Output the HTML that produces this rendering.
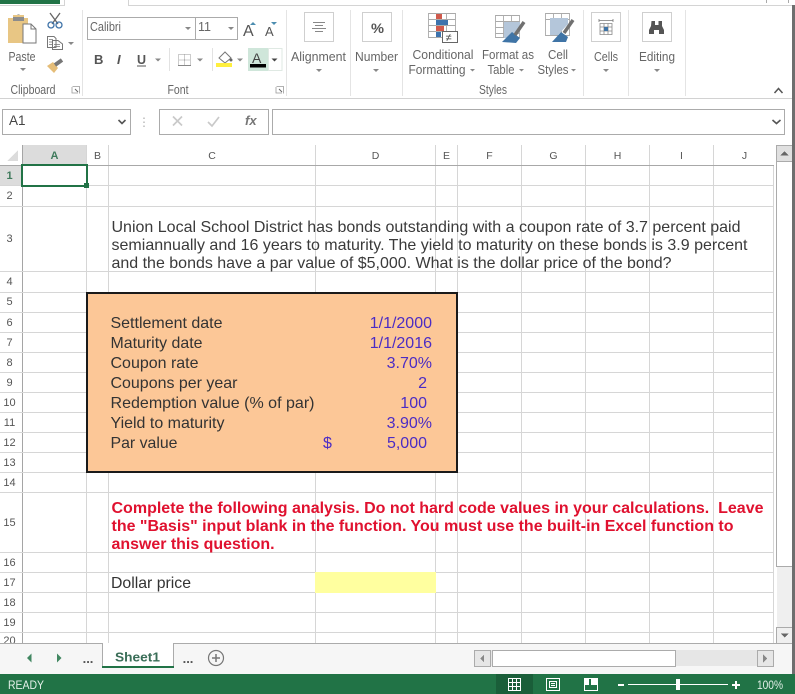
<!DOCTYPE html>
<html><head><meta charset="utf-8"><style>
html,body{margin:0;padding:0;background:#fff;width:795px;height:694px;overflow:hidden}
svg{display:block;position:absolute;left:0;top:0}
text{font-family:"Liberation Sans",sans-serif;white-space:pre}
.g{stroke:#d6d6d6;stroke-width:1;fill:none}
.c{font-size:16px;fill:#333}
.b{font-size:16px;fill:#4b2cc4}
.q{font-size:16px;fill:#3a3a3a}
.h{font-size:12.500px;fill:#666;text-anchor:middle}
.n{font-size:12.500px;fill:#666;text-anchor:middle}
.red{font-size:16px;font-weight:bold;fill:#e0112f}
.tri{fill:#888}
</style></head><body>
<svg width="795" height="694" viewBox="0 0 795 694" xmlns="http://www.w3.org/2000/svg" shape-rendering="crispEdges">
<rect width="795" height="694" fill="#fff"/>
<rect x="0" y="0" width="60" height="4" fill="#217346"/>
<path d="M0 5.500H64.500V0M128.500 0V5.500H792" stroke="#d4d4d4" fill="none"/>
<path d="M766.500 0V3M788.500 0V3" stroke="#aaa"/>
<path d="M82.500 10V96M286.500 10V96M350.500 10V96M402.500 10V96M583.500 10V96M628.500 10V96M685.500 10V96" stroke="#e4e4e4"/>
<path d="M0 98.500H792" stroke="#d2d2d2"/>
<g shape-rendering="auto">
<!-- paste -->
<path d="M8 18H13V15H24V18H28V43H8Z" fill="#e8c684"/>
<path d="M13 17H24V21H13ZM17 15a2 2 0 0 1 3 0" fill="#8c8c8c"/>
<path d="M23 24H31L36 29V43H23Z" fill="#fff" stroke="#777"/>
<path d="M31 24V29H36" fill="none" stroke="#777"/>
<text class="n" x="22" y="61" textLength="27" lengthAdjust="spacingAndGlyphs">Paste</text>
<path class="tri" d="M20 68h6l-3 3z"/>
<!-- cut -->
<path d="M50 13L58 24M60 13L52 24" stroke="#666" stroke-width="1.300" fill="none"/>
<circle cx="51" cy="25" r="3" fill="none" stroke="#3f73a8" stroke-width="1.300"/>
<circle cx="59" cy="25" r="3" fill="none" stroke="#3f73a8" stroke-width="1.300"/>
<!-- copy -->
<path d="M47.500 36.500H54L56 38.500V47.500H47.500Z M52.500 40.500H58L62.500 44V49.500H52.500Z" fill="#fff" stroke="#777"/>
<path d="M49 39.500H53M49 42H52M49 44.500H52M54 44.500H60M54 46.500H60" stroke="#777" stroke-width=".7"/>
<path class="tri" d="M68 42h6l-3 3z"/>
<!-- painter -->
<path d="M47 66L53 62L58 68L54 73Z" fill="#e5bd78"/>
<path d="M55 65L62 60" stroke="#777" stroke-width="4"/>
<text class="n" x="33" y="94" textLength="45" lengthAdjust="spacingAndGlyphs">Clipboard</text>
<path d="M72.500 86.500H79.500V93.500M72 87V93H78" stroke="#999" fill="none" stroke-width=".8"/>
<path d="M75 89L78 92" stroke="#666"/>
<!-- font controls -->
<rect x="87.500" y="17.500" width="150" height="22" fill="#fff" stroke="#ababab"/>
<path d="M195.500 18V39" stroke="#ababab"/>
<text x="90" y="31" font-size="12.500" fill="#666" textLength="31" lengthAdjust="spacingAndGlyphs">Calibri</text>
<text x="198" y="31" font-size="12.500" fill="#666" textLength="13" lengthAdjust="spacingAndGlyphs">11</text>
<path class="tri" d="M185 27h6l-3 3zM228 27h6l-3 3z"/>
<text x="243" y="36" font-size="16" fill="#555">A</text>
<text x="265" y="36" font-size="13" fill="#555">A</text>
<path d="M250 25l3-3 3 3z" fill="#4c8db0"/>
<path d="M271 22h6l-3 3z" fill="#4c8db0"/>
<text x="94" y="64" font-size="13" font-weight="bold" fill="#555">B</text>
<text x="117" y="64" font-size="13" font-weight="bold" font-style="italic" fill="#555" font-family="Liberation Serif">I</text>
<text x="137" y="64" font-size="12.500" font-weight="bold" fill="#555">U</text>
<path d="M137 66H146" stroke="#555"/>
<path class="tri" d="M155 58.500h6l-3 3z"/>
<path d="M169.500 48V71" stroke="#e2e2e2"/>
<path d="M178.500 54.500H190.500V65.500H178.500ZM184.500 54.500V65.500M178.500 60H190.500" stroke="#999" stroke-dasharray="1 1" fill="none"/>
<path d="M178 65.500H191" stroke="#888"/>
<path class="tri" d="M197 58.500h6l-3 3z"/>
<path d="M212.500 48V71" stroke="#e2e2e2"/>
<path d="M219 58L225 52L231 58L225 63Z" fill="#fff" stroke="#777"/>
<circle cx="231" cy="60" r="1.500" fill="#666"/>
<rect x="216" y="63" width="16" height="4" fill="#ffef3e"/>
<path class="tri" d="M237 58.500h6l-3 3z"/>
<rect x="248" y="48" width="20" height="23" fill="#cfe6da"/>
<rect x="268.500" y="48.500" width="13.500" height="22" fill="#fff" stroke="#dfe9e3"/>
<text x="252" y="63" font-size="14" fill="#444">A</text>
<rect x="250" y="64" width="16" height="3.500" fill="#000"/>
<path d="M271.500 58.500h6l-3 3z" fill="#444"/>
<text class="n" x="178" y="94" textLength="21" lengthAdjust="spacingAndGlyphs">Font</text>
<path d="M276.500 86.500H283.500V93.500M276 87V93H282" stroke="#999" fill="none" stroke-width=".8"/>
<path d="M279 89L282 92" stroke="#666"/>
<!-- alignment -->
<rect x="304.500" y="12.500" width="29" height="29" fill="#fff" stroke="#cfcfcf"/>
<path d="M313 22.500H325M315 25.500H323M312 28.500H326M315 31.500H323" stroke="#888"/>
<text class="n" x="318.500" y="61" textLength="55" lengthAdjust="spacingAndGlyphs">Alignment</text>
<path class="tri" d="M316 69h6l-3 3z"/>
<!-- number -->
<rect x="362.500" y="12.500" width="29" height="29" fill="#fff" stroke="#cfcfcf"/>
<text x="371" y="33" font-size="14" fill="#555" font-weight="bold" textLength="13" lengthAdjust="spacingAndGlyphs">%</text>
<text class="n" x="376.500" y="61" textLength="43" lengthAdjust="spacingAndGlyphs">Number</text>
<path class="tri" d="M373 69h6l-3 3z"/>
<!-- conditional formatting -->
<path d="M428.500 13.500H455.500V37.500H428.500ZM428.500 19.500H455.500M428.500 25.500H455.500M428.500 31.500H455.500M437.500 13.500V37.500M446.500 13.500V37.500" stroke="#aaa" fill="#fff" stroke-width=".9"/>
<rect x="436" y="14" width="6" height="5" fill="#d05a4c"/>
<rect x="436" y="20" width="12" height="5" fill="#3d73ad"/>
<rect x="436" y="26" width="8" height="5" fill="#d05a4c"/>
<rect x="436" y="32" width="5" height="5" fill="#3d73ad"/>
<rect x="442.500" y="31.500" width="15" height="11" fill="#fff" stroke="#666"/>
<text x="445.500" y="41" font-size="11" fill="#444">≠</text>
<text class="h" x="443" y="59" textLength="61" lengthAdjust="spacingAndGlyphs">Conditional</text>
<text class="h" x="437" y="74" textLength="57" lengthAdjust="spacingAndGlyphs">Formatting</text>
<path class="tri" d="M470 69h5l-2.500 2.500z"/>
<!-- format as table -->
<path d="M495.500 15.500H519.500V37.500H495.500ZM495.500 21.500H519.500M495.500 27.500H519.500M495.500 33.500H519.500M503.500 15.500V37.500M511.500 15.500V37.500" stroke="#aaa" fill="#fff" stroke-width=".9"/>
<path d="M504 22H520V27L510 38H504Z" fill="#b4c6da"/>
<path d="M502 42L512 32L520 38L516 43Z" fill="#3f74a6"/>
<path d="M515 35L524 22" stroke="#707070" stroke-width="3.500"/>
<text class="h" x="508" y="59" textLength="52" lengthAdjust="spacingAndGlyphs">Format as</text>
<text class="h" x="501" y="74" textLength="27" lengthAdjust="spacingAndGlyphs">Table</text>
<path class="tri" d="M519 69h5l-2.500 2.500z"/>
<!-- cell styles -->
<path d="M545.500 13.500H569.500V35.500H545.500ZM545.500 19.500H569.500M553.500 13.500V35.500M561.500 13.500V35.500" stroke="#aaa" fill="#fff" stroke-width=".9"/>
<path d="M550 18H568V24L558 35H550Z" fill="#b4c6da"/>
<path d="M552 42L561 32L568 37L566 42Z" fill="#3f74a6"/>
<path d="M564 33L573 20" stroke="#707070" stroke-width="3.500"/>
<text class="h" x="558" y="59" textLength="20" lengthAdjust="spacingAndGlyphs">Cell</text>
<text class="h" x="553" y="74" textLength="31" lengthAdjust="spacingAndGlyphs">Styles</text>
<path class="tri" d="M571 69h5l-2.500 2.500z"/>
<text class="n" x="493" y="94" textLength="28" lengthAdjust="spacingAndGlyphs">Styles</text>
<!-- cells -->
<rect x="591.500" y="12.500" width="29" height="29" fill="#fff" stroke="#cfcfcf"/>
<path d="M600 23.500H612V34.500H600ZM600 27H612M600 31H612M604 23.500V34.500M608 23.500V34.500" stroke="#888" fill="none" stroke-width=".8"/>
<rect x="604" y="27" width="4" height="4" fill="#3f74a6"/>
<path d="M599 20.500H613M599 19V22M613 19V22" stroke="#777" fill="none" stroke-width=".8"/>
<text class="n" x="606" y="61" textLength="24" lengthAdjust="spacingAndGlyphs">Cells</text>
<path class="tri" d="M603 69h6l-3 3z"/>
<!-- editing -->
<rect x="642.500" y="12.500" width="29" height="29" fill="#fff" stroke="#cfcfcf"/>
<path d="M651.500 21H655V25H658.500V21H662V26L664 30V34H659V30H654V34H649V30L651 26Z" fill="#555"/>
<text class="n" x="657" y="61" textLength="36" lengthAdjust="spacingAndGlyphs">Editing</text>
<path class="tri" d="M654 69h6l-3 3z"/>
<path d="M774.500 93L778.500 88.500L782.500 93" stroke="#555" stroke-width="1.500" fill="none"/>
</g>
<!-- formula bar -->
<rect x="2.500" y="109.500" width="128" height="25" fill="#fff" stroke="#ababab"/>
<rect x="159.500" y="109.500" width="109" height="25" fill="#fff" stroke="#ababab"/>
<rect x="272.500" y="109.500" width="512" height="25" fill="#fff" stroke="#ababab"/>
<g shape-rendering="auto">
<text x="9" y="125" font-size="13.500" fill="#444">A1</text>
<path d="M118.500 120L122 123.500L125.500 120" stroke="#555" stroke-width="1.600" fill="none"/>
<path d="M772.500 120L776.500 123.500L780.500 120" stroke="#555" stroke-width="1.600" fill="none"/>
<path d="M144 117.500v1.500M144 121.500v1.500M144 125.500v1.500" stroke="#aaa" stroke-width="1.200"/>
<path d="M173 116.500L182 125.500M182 116.500L173 125.500" stroke="#c9c9c9" stroke-width="1.700"/>
<path d="M208 122L212 126L219 117" stroke="#c9c9c9" stroke-width="1.700" fill="none"/>
<text x="245" y="125" font-size="13" font-style="italic" font-family="Liberation Serif" fill="#777" font-weight="bold">fx</text>
</g>
<!-- grid -->
<rect x="22" y="145" width="64" height="20" fill="#dcdcdc"/>
<rect x="0" y="165" width="22" height="20" fill="#dcdcdc"/>
<path class="g" d="M86.500 145V643M108.500 145V643M315.500 145V643M435.500 145V643M457.500 145V643M521.500 145V643M585.500 145V643M649.500 145V643M713.500 145V643M773.500 165V643"/>
<path d="M22.500 145V643" stroke="#a5a5a5"/>
<path class="g" d="M0 185.500H774M0 206.500H774M0 271.500H774M0 292.500H774M0 312.500H774M0 332.500H774M0 352.500H774M0 372.500H774M0 392.500H774M0 412.500H774M0 432.500H774M0 452.500H774M0 472.500H774M0 492.500H774M0 552.500H774M0 572.500H774M0 592.500H774M0 612.500H774M0 632.500H774"/>
<path d="M0 165.500H774" stroke="#a8a8a8"/>
<path d="M7 161L18 150V161Z" fill="#dcdcdc"/>
<g shape-rendering="auto">
<text x="54.500" y="159" font-size="11" font-weight="bold" fill="#3f7a5c" text-anchor="middle">A</text>
<g font-size="10.500" fill="#555" text-anchor="middle">
<text x="97.500" y="159">B</text><text x="212" y="159">C</text><text x="375.500" y="159">D</text><text x="446.500" y="159">E</text><text x="489.500" y="159">F</text><text x="553.500" y="159">G</text><text x="617.500" y="159">H</text><text x="681.500" y="159">I</text><text x="744.500" y="159">J</text>
</g>
<text x="9.500" y="179" font-size="11" font-weight="bold" fill="#3f7a5c" text-anchor="middle">1</text>
<g font-size="11" fill="#555" text-anchor="middle">
<text x="9.500" y="199">2</text><text x="9.500" y="242">3</text><text x="9.500" y="285">4</text><text x="9.500" y="305">5</text><text x="9.500" y="326">6</text><text x="9.500" y="346">7</text><text x="9.500" y="366">8</text><text x="9.500" y="386">9</text><text x="9.500" y="406">10</text><text x="9.500" y="426">11</text><text x="9.500" y="446">12</text><text x="9.500" y="466">13</text><text x="9.500" y="486">14</text><text x="9.500" y="526">15</text><text x="9.500" y="566">16</text><text x="9.500" y="586">17</text><text x="9.500" y="606">18</text><text x="9.500" y="626">19</text><text x="9.500" y="644">20</text>
</g>
</g>
<!-- selection -->
<rect x="22" y="165" width="65" height="21" fill="#fff" stroke="#217346" stroke-width="2"/>
<rect x="84" y="183" width="5" height="5" fill="#217346"/>
<!-- question -->
<g shape-rendering="auto">
<text class="q" x="111.500" y="232" textLength="629" lengthAdjust="spacingAndGlyphs">Union Local School District has bonds outstanding with a coupon rate of 3.7 percent paid</text>
<text class="q" x="111.500" y="250" textLength="636" lengthAdjust="spacingAndGlyphs">semiannually and 16 years to maturity. The yield to maturity on these bonds is 3.9 percent</text>
<text class="q" x="111.500" y="268" textLength="560" lengthAdjust="spacingAndGlyphs">and the bonds have a par value of $5,000. What is the dollar price of the bond?</text>
</g>
<!-- orange box -->
<rect x="87" y="293" width="370" height="179" fill="#fcc797" stroke="#1a1a1a" stroke-width="2"/>
<g shape-rendering="auto">
<text class="c" x="110.500" y="328" textLength="112" lengthAdjust="spacingAndGlyphs">Settlement date</text>
<text class="c" x="110.500" y="348" textLength="92" lengthAdjust="spacingAndGlyphs">Maturity date</text>
<text class="c" x="110.500" y="368" textLength="88" lengthAdjust="spacingAndGlyphs">Coupon rate</text>
<text class="c" x="110.500" y="388" textLength="127" lengthAdjust="spacingAndGlyphs">Coupons per year</text>
<text class="c" x="110.500" y="408" textLength="204" lengthAdjust="spacingAndGlyphs">Redemption value (% of par)</text>
<text class="c" x="110.500" y="428" textLength="114" lengthAdjust="spacingAndGlyphs">Yield to maturity</text>
<text class="c" x="110.500" y="448" textLength="67" lengthAdjust="spacingAndGlyphs">Par value</text>
<text class="b" x="432" y="328" text-anchor="end">1/1/2000</text>
<text class="b" x="432" y="348" text-anchor="end">1/1/2016</text>
<text class="b" x="432" y="368" text-anchor="end">3.70%</text>
<text class="b" x="427" y="388" text-anchor="end">2</text>
<text class="b" x="427" y="408" text-anchor="end">100</text>
<text class="b" x="432" y="428" text-anchor="end">3.90%</text>
<text class="b" x="323" y="448">$</text>
<text class="b" x="427" y="448" text-anchor="end">5,000</text>
<!-- red -->
<text class="red" x="111.500" y="513" textLength="652" lengthAdjust="spacingAndGlyphs">Complete the following analysis. Do not hard code values in your calculations.  Leave</text>
<text class="red" x="111.500" y="531" textLength="622" lengthAdjust="spacingAndGlyphs">the "Basis" input blank in the function. You must use the built-in Excel function to</text>
<text class="red" x="111.500" y="549" textLength="163" lengthAdjust="spacingAndGlyphs">answer this question.</text>
<text class="c" x="111" y="588" textLength="80" lengthAdjust="spacingAndGlyphs">Dollar price</text>
</g>
<rect x="315" y="572" width="121" height="21" fill="#ffff9f"/>
<!-- v scrollbar -->
<rect x="776.500" y="145.500" width="16" height="16" fill="#e0e0e0" stroke="#ababab"/>
<rect x="776.500" y="627.500" width="16" height="16" fill="#efefef" stroke="#ababab"/>
<rect x="776.500" y="161.500" width="16" height="405" fill="#fff" stroke="#ababab"/>
<rect x="777" y="567" width="15" height="60" fill="#efefef"/>
<path d="M780.500 155.500L784.500 151L788.500 155.500Z M780.500 633.500H788.500L784.500 637.500Z" fill="#666"/>
<!-- sheet tabs -->
<rect x="0" y="644" width="793" height="30" fill="#f6f6f6"/>
<path d="M0 643.500H793" stroke="#ababab"/>
<rect x="102" y="643" width="72" height="25" fill="#fff"/>
<path d="M102.500 643V667.500M173.500 643V667.500" stroke="#ababab"/>
<rect x="102" y="666" width="72" height="2" fill="#217346"/>
<path d="M103 643.500H173" stroke="#fff"/>
<g shape-rendering="auto">
<path d="M31.500 653.500L27 658L31.500 662.500Z" fill="#217346" opacity=".85"/>
<path d="M57 653.500L61.500 658L57 662.500Z" fill="#217346" opacity=".85"/>
<text x="88" y="663" font-size="13" font-weight="bold" fill="#555" text-anchor="middle">...</text>
<text x="188" y="663" font-size="13" font-weight="bold" fill="#555" text-anchor="middle">...</text>
<text x="137.500" y="661.500" font-size="13" font-weight="bold" font-family="Liberation Serif" fill="#3a6e58" text-anchor="middle" textLength="45" lengthAdjust="spacingAndGlyphs">Sheet1</text>
<circle cx="216" cy="658" r="7.500" fill="none" stroke="#777" stroke-width="1.200"/>
<path d="M212 658H220M216 654V662" stroke="#777" stroke-width="1.500"/>
</g>
<!-- h scrollbar -->
<rect x="474" y="650" width="300" height="16" fill="#e6e6e6"/>
<rect x="474.500" y="650.500" width="16" height="16" fill="#e6e6e6" stroke="#ababab"/>
<rect x="757.500" y="650.500" width="16" height="16" fill="#e6e6e6" stroke="#ababab"/>
<rect x="492.500" y="650.500" width="183" height="16" fill="#fff" stroke="#ababab"/>
<path d="M484 654.500L480 658.500L484 662.500ZM763 654.500L767 658.500L763 662.500Z" fill="#888"/>
<!-- right edge strip -->
<rect x="792" y="5" width="3" height="669" fill="#6e6e6e"/>
<!-- status bar -->
<rect x="0" y="674" width="795" height="20" fill="#217346"/>
<rect x="496" y="674" width="37" height="20" fill="#1a5e39"/>
<g shape-rendering="auto">
<text x="8" y="689" font-size="12" fill="#e4f0e9" textLength="36" lengthAdjust="spacingAndGlyphs">READY</text>
<text x="770" y="689" font-size="12" fill="#e4f0e9" text-anchor="middle" textLength="26" lengthAdjust="spacingAndGlyphs">100%</text>
</g>
<path d="M508.500 678.500H520.500V690.500H508.500ZM512.500 678.500V690.500M516.500 678.500V690.500M508.500 682.500H520.500M508.500 686.500H520.500" stroke="#fff" fill="none" stroke-width=".9"/>
<path d="M546.500 678.500H559.500V690.500H546.500ZM549.500 681.500H556.500V687.500H549.500ZM551 683.500H555M551 685.500H555" stroke="#fff" fill="none" stroke-width=".9"/>
<path d="M584.500 678.500H597.500V690.500H584.500Z" stroke="#fff" fill="none"/>
<rect x="585" y="678" width="4" height="7" fill="#fff"/><rect x="591" y="678" width="6" height="7" fill="#fff"/>
<rect x="618" y="684" width="6" height="2" fill="#fff"/>
<rect x="628" y="684" width="100" height="1" fill="#fff"/>
<rect x="676" y="679" width="4" height="11" fill="#fff"/>
<rect x="732" y="684" width="8" height="2" fill="#fff"/><rect x="735" y="681" width="2" height="8" fill="#fff"/>
</svg>
</body></html>
